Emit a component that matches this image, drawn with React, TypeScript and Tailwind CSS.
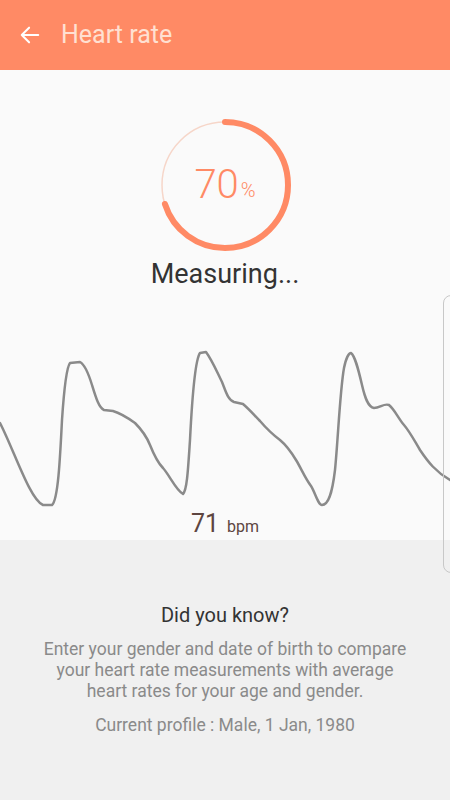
import React from 'react';

const wave =
  'M0,423 C14,450 30,500 43,505 L52,505 C58,500 60,460 62,420 C64,390 66,368 70,363 L80,362 C84,364 88,372 92,385 C96,398 99,408 104,410 L113,411 C120,413 128,418 135,423 C142,430 146,435 150,445 C154,455 157,462 163,468 C170,476 176,490 183,494 C187,490 188,470 190,440 C192,400 195,360 200,353 L206,352 C212,360 217,372 222,382 C226,392 228,400 234,402 L243,404 C250,410 254,415 260,421 C266,428 272,434 280,440 C286,445 290,450 296,460 C301,468 305,478 311,486 C315,492 318,505 322,505 C328,505 332,495 335,470 C338,440 340,390 344,368 C346,358 349,353 351,353 C355,356 358,368 362,385 C365,398 368,407 374,408 C380,408 384,403 389,405 C395,410 398,418 404,425 C410,432 414,440 420,450 C428,462 436,472 450,480';

export default function App() {
  return (
    <div
      className="relative w-[450px] h-[800px] overflow-hidden bg-[#f0f0f0]"
      style={{ fontFamily: 'Roboto, "Noto Sans", sans-serif' }}
    >
      {/* header */}
      <div className="h-[70px] bg-[#ff8a65] flex items-center pl-[19px]">
        <svg width="22" height="22" viewBox="0 0 24 24" fill="none" stroke="#fff" strokeWidth="2.2" strokeLinecap="round" strokeLinejoin="round">
          <path d="M21 12H3M11 4l-8 8 8 8" />
        </svg>
        <span className="ml-[20px] text-[25px] text-[#ffe0d2] leading-none pb-[1px]">Heart rate</span>
      </div>

      {/* measuring area */}
      <div className="relative h-[470px] bg-[#fafafa]">
        <div className="flex flex-col items-center pt-[48px]">
          <div className="relative w-[134px] h-[134px]">
            <svg width="134" height="134" viewBox="0 0 134 134" className="absolute inset-0">
              <circle cx="67" cy="67" r="63" fill="none" stroke="#f6d6c9" strokeWidth="1.5" />
              <circle
                cx="67"
                cy="67"
                r="63"
                fill="none"
                stroke="#ff8a65"
                strokeWidth="6"
                strokeLinecap="round"
                strokeDasharray={`${2 * Math.PI * 63 * 0.7} ${2 * Math.PI * 63}`}
                transform="rotate(-90 67 67)"
              />
            </svg>
            <div className="absolute inset-0 flex items-center justify-center text-[#ff8a65]">
              <span className="text-[40px] font-light leading-none">70</span>
              <span className="text-[20px] font-light leading-none mt-[10px] ml-[2px]">%</span>
            </div>
          </div>
          <div className="mt-[9px] text-[27px] text-[#333] leading-none">Measuring...</div>
        </div>

        <svg width="450" height="470" viewBox="0 70 450 470" className="absolute left-0 top-0" fill="none">
          <path d={wave} stroke="#8a8a8a" strokeWidth="2.5" strokeLinejoin="round" strokeLinecap="round" />
        </svg>

        <div className="absolute left-0 right-0 top-[441px] flex justify-center items-baseline text-[#5d4540]">
          <span className="text-[25px] leading-none">71</span>
          <span className="text-[16px] leading-none ml-[8px]">bpm</span>
        </div>
      </div>

      {/* info */}
      <div className="flex flex-col items-center text-center pt-[65px] px-[42px]">
        <div className="text-[20px] text-[#333] leading-none">Did you know?</div>
        <p className="mt-[14px] text-[17.5px] leading-[21px] text-[#8a8a8a]">
          Enter your gender and date of birth to compare your heart rate measurements with average heart rates for your age and gender.
        </p>
        <p className="mt-[13px] text-[17.5px] leading-[21px] text-[#8a8a8a]">Current profile : Male, 1 Jan, 1980</p>
      </div>

      {/* edge handle */}
      <div className="absolute left-[443px] top-[295px] w-[20px] h-[278px] rounded-[8px] border border-[#c8c8c8]" />
    </div>
  );
}
